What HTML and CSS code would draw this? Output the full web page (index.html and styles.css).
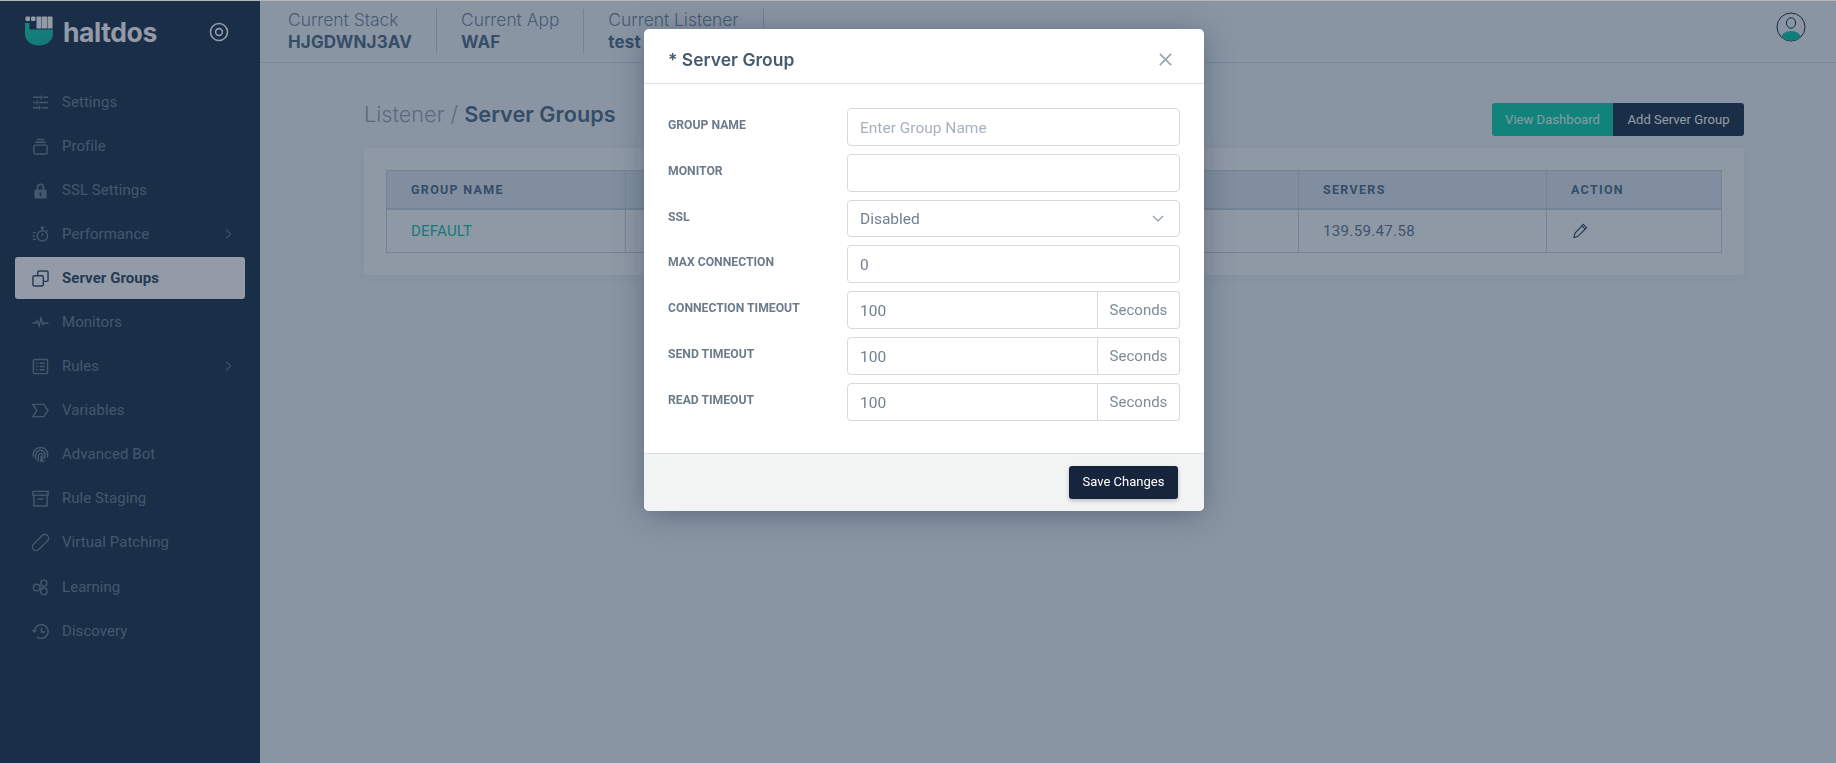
FILE: index.html
```html
<!DOCTYPE html>
<html lang="en">
<head>
<meta charset="utf-8">
<title>Server Groups</title>
<link rel="stylesheet" href="styles.css">
</head>
<body>
<div class="app">
  <aside class="sidebar">
    <div class="brand">
      <svg class="brand-mark" viewBox="0 0 28 30" aria-hidden="true">
        <defs><linearGradient id="lg" x1="0" y1="0" x2="1" y2="1"><stop offset="0" stop-color="#12d8b0"/><stop offset="1" stop-color="#08b8a0"/></linearGradient></defs>
        <path fill="url(#lg)" d="M0 7h4.500v6.500H28V18c0 7-7 11.500-14 11.500S0 25 0 18z"/>
        <rect x=".5" y=".5" width="4.500" height="4.500" rx="1" fill="#fff"/><rect x="6" y=".5" width="4.500" height="4.500" rx="1" fill="#fff"/><rect x="11.500" y=".5" width="5" height="12" rx=".6" fill="#fff"/><rect x="17" y=".5" width="5" height="12" rx=".6" fill="#fff"/><rect x="22.500" y=".5" width="5" height="12" rx=".6" fill="#fff"/>
      </svg>
      <span class="brand-name">haltdos</span>
      <svg class="brand-target" viewBox="0 0 20 20" aria-hidden="true"><circle cx="10" cy="10" r="8.500" fill="none" stroke="#fff" stroke-width="1.600"/><circle cx="10" cy="10" r="3.400" fill="none" stroke="#fff" stroke-width="1.600"/></svg>
    </div>
    <nav class="menu">
      <a class="item"><svg class="ic" viewBox="0 0 18 18"><path d="M1 3.500h8M12 3.500h5M1 9h3M7 9h10M1 14.500h6M10 14.500h7M10 1.500v4M5.500 7v4M8 12.500v4"/></svg><span>Settings</span></a>
      <a class="item"><svg class="ic" viewBox="0 0 18 18"><path d="M5 1.500h8M3.500 4.500h11"/><rect x="2" y="7.500" width="14" height="9.500" rx="1.500"/></svg><span>Profile</span></a>
      <a class="item"><svg class="ic" viewBox="0 0 18 18"><path class="solid" d="M5 8V5.500a4 4 0 0 1 8 0V8h1c.8 0 1.500.7 1.500 1.500V16c0 .8-.7 1.500-1.500 1.500H4c-.8 0-1.500-.7-1.500-1.500V9.500C2.500 8.700 3.200 8 4 8zm1.800 0h4.400V5.500a2.200 2.200 0 0 0-4.400 0zM9 11a1.300 1.300 0 0 0-.6 2.400V15h1.200v-1.600A1.300 1.300 0 0 0 9 11z"/></svg><span>SSL Settings</span></a>
      <a class="item"><svg class="ic" viewBox="0 0 18 18"><circle cx="11" cy="10.500" r="5.500"/><path d="M11 2v3M9 1.500h4M11 8v2.500M1 7h3M0.500 10.500h2.500M1 14h3M15.500 4.500l1 1"/></svg><span>Performance</span><svg class="chev" viewBox="0 0 8 12"><path d="M1.500 1l5 5-5 5"/></svg></a>
      <a class="item active"><svg class="ic" viewBox="0 0 18 18"><rect x="1" y="6" width="11" height="11" rx="1.500"/><path d="M6 6V2.500C6 1.700 6.700 1 7.500 1h8c.8 0 1.500.7 1.500 1.500v8c0 .8-.7 1.500-1.500 1.500H12"/></svg><span>Server Groups</span></a>
      <a class="item"><svg class="ic" viewBox="0 0 18 18"><path d="M.5 9.500h3.500l1.500-2.500 2 5.500 2-8 2 6.500 1.200-1.500h4.800"/></svg><span>Monitors</span></a>
      <a class="item"><svg class="ic" viewBox="0 0 18 18"><rect x="1.500" y="1.500" width="15" height="15" rx="1.500"/><path d="M4.500 5.500h1.500M8 5.500h5.500M4.500 9h1.500M8 9h5.500M4.500 12.500h1.500M8 12.500h5.500"/></svg><span>Rules</span><svg class="chev" viewBox="0 0 8 12"><path d="M1.500 1l5 5-5 5"/></svg></a>
      <a class="item"><svg class="ic" viewBox="0 0 18 18"><path d="M1 2.500h11.500L17 9l-4.500 6.500H1L5 9z"/></svg><span>Variables</span></a>
      <a class="item"><svg class="ic" viewBox="0 0 18 18"><path d="M1.500 11.500C.5 5.500 4 1.500 9 1.500s8.500 4 7.500 10.500M4 14.500C3 8.500 5 4.500 9 4.500s5.500 3.500 4.500 9M6.800 16.500C5.800 11 7 7.500 9.300 7.500s2.300 3.500 1.500 9M9.500 10.500c.2 2 .1 4-.2 6.500M13 15.500l-.3 1.500"/></svg><span>Advanced Bot</span></a>
      <a class="item"><svg class="ic" viewBox="0 0 18 18"><rect x="1" y="1.500" width="16" height="4"/><path d="M2 5.500V17h14V5.500M6 9.500h6"/></svg><span>Rule Staging</span></a>
      <a class="item"><svg class="ic" viewBox="0 0 18 18"><rect x="-1.500" y="5" width="21" height="8" rx="4" transform="rotate(-45 9 9)"/><path d="M8 8l.1.1M10 8l.1.1M8 10l.1.100M10 10l.1.100"/></svg><span>Virtual Patching</span></a>
      <a class="item item-low"><svg class="ic" viewBox="0 0 18 18"><circle cx="5" cy="9" r="3.500"/><circle cx="12.500" cy="4.500" r="3.300"/><circle cx="12.500" cy="13" r="3.500"/></svg><span>Learning</span></a>
      <a class="item item-low"><svg class="ic" viewBox="0 0 18 18"><path d="M2.500 9A7.300 7.300 0 1 1 5 14.500M.5 7.500l2 2 2-2M10 5v4.500h4"/></svg><span>Discovery</span></a>
    </nav>
  </aside>
  <div class="main">
    <header class="topbar">
      <div class="crumb"><span class="crumb-label">Current Stack</span><strong class="crumb-value">HJGDWNJ3AV</strong></div>
      <div class="crumb"><span class="crumb-label">Current App</span><strong class="crumb-value">WAF</strong></div>
      <div class="crumb"><span class="crumb-label">Current Listener</span><strong class="crumb-value">test</strong></div>
      <svg class="avatar" viewBox="0 0 30 30" aria-hidden="true"><defs><clipPath id="av"><circle cx="15" cy="15" r="13.800"/></clipPath></defs><circle cx="15" cy="15" r="14" fill="none" stroke="#15263c" stroke-width="1"/><ellipse cx="15" cy="26" rx="10" ry="7" fill="#08c8a8" clip-path="url(#av)"/><ellipse cx="15" cy="11" rx="4.600" ry="5.200" fill="none" stroke="#15263c" stroke-width="1"/></svg>
    </header>
    <main class="content">
      <div class="title-row">
        <h1 class="title"><span class="title-light">Listener / </span>Server Groups</h1>
        <div class="actions"><button class="btn btn-teal">View Dashboard</button><button class="btn btn-navy">Add Server Group</button></div>
      </div>
      <section class="card">
        <table class="table">
          <thead><tr><th class="c1">Group Name</th><th class="c2"></th><th class="c3">Servers</th><th>Action</th></tr></thead>
          <tbody><tr><td class="link">DEFAULT</td><td></td><td>139.59.47.58</td><td><svg class="pencil" viewBox="0 0 16 16" aria-hidden="true"><path d="M11 1.500l3.500 3.500L5 14.500l-4 1 1-4.500zM9.500 3l3.500 3.500"/></svg></td></tr></tbody>
        </table>
      </section>
    </main>
  </div>
</div>
<div class="backdrop"></div>
<div class="modal">
  <div class="modal-head"><h2 class="modal-title">* Server Group</h2><svg class="close" viewBox="0 0 14 14" aria-hidden="true"><path d="M1 1l12 12M13 1L1 13"/></svg></div>
  <form class="modal-body">
    <label class="lbl">Group Name</label><input class="field" placeholder="Enter Group Name">
    <label class="lbl">Monitor</label><input class="field">
    <label class="lbl">SSL</label><div class="field select"><span>Disabled</span><svg class="caret" viewBox="0 0 12 8" aria-hidden="true"><path d="M1 1l5 5 5-5"/></svg></div>
    <label class="lbl">Max Connection</label><input class="field" value="0">
    <label class="lbl">Connection Timeout</label><div class="group"><input class="field" value="100"><span class="addon">Seconds</span></div>
    <label class="lbl">Send Timeout</label><div class="group"><input class="field" value="100"><span class="addon">Seconds</span></div>
    <label class="lbl">Read Timeout</label><div class="group"><input class="field" value="100"><span class="addon">Seconds</span></div>
  </form>
  <div class="modal-foot"><button class="btn-save">Save Changes</button></div>
</div>
</body>
</html>
```
FILE: styles.css
```css
* { box-sizing: border-box; }
html, body { margin: 0; height: 100%; overflow: hidden; }
body { font-family: Roboto, "Liberation Sans", sans-serif; background: #eef4f8; border-top: 1px solid #b6b6b6; }
.app { display: flex; height: 762px; }

.sidebar { width: 260px; flex: none; background: #1b2f47; }
.brand { display: flex; align-items: center; height: 62px; padding: 4px 0 0 25px; }
.brand-mark { width: 28px; height: 30px; flex: none; margin-top: -6px; }
.brand-name { margin-left: 10px; font: 700 26.500px/1 Inter, sans-serif; color: #fff; letter-spacing: -.4px; width: 146px; flex: none; margin-top: -4px; }
.brand-target { width: 20px; height: 20px; flex: none; margin-left: 0; margin-top: -4px; }
.menu { display: flex; flex-direction: column; gap: 2px; padding: 18px 15px 0; }
.item { display: flex; align-items: center; height: 42px; padding: 0 13px 0 17px; border-radius: 3px; color: #6a7e93; font-size: 15px; letter-spacing: .05px; }
.item-low { position: relative; top: 1px; }
.item span { margin-left: 13px; flex: 1; }
.ic { width: 17px; height: 17px; flex: none; fill: none; stroke: currentColor; stroke-width: 1.500; overflow: visible; }
.ic .solid { fill: currentColor; stroke: none; }
.chev { width: 7px; height: 12px; flex: none; fill: none; stroke: currentColor; stroke-width: 1.200; }
.active { background: #fff; color: #2c4563; font-weight: 700; }

.main { flex: 1; min-width: 0; display: flex; flex-direction: column; }
.topbar { display: flex; align-items: center; height: 62px; padding: 8px 0 10px 28px; border-bottom: 1px solid #cfd9e4; flex: none; }
.crumb { display: flex; flex-direction: column; height: 44px; padding-right: 24px; margin-right: 24px; border-right: 1px solid #c4ced9; }
.crumb-label { font: 300 17.400px/22px Inter, sans-serif; color: #6f859b; white-space: nowrap; }
.crumb-value { font: 700 17px/22px Inter, sans-serif; color: #4f6a86; letter-spacing: .12px; }
.avatar { width: 30px; height: 30px; margin-left: auto; margin-right: 30px; margin-top: -8px; }

.content { padding: 40px 92px 0 104px; }
.title-row { display: flex; justify-content: space-between; align-items: flex-start; height: 45px; }
.title { margin: -4px 0 0; font: 600 21.700px/30px Inter, sans-serif; color: #4f6a86; }
.title-light { font-weight: 300; color: #93a3b3; }
.actions { display: flex; }
.btn { height: 33px; border: 0; font: 400 13.100px/33px Roboto, sans-serif; color: #fff; padding: 0; }
.btn-teal { width: 121px; background: #09d1a9; border-radius: 3px 0 0 3px; color: #e8fffa; }
.btn-navy { width: 131px; background: #1b2f47; border-radius: 0 3px 3px 0; }
.card { background: #fafbfd; border-radius: 4px; padding: 22px; height: 127px; box-shadow: 0 2px 14px rgba(30,50,80,.06); }
.table { width: 1336px; border-collapse: collapse; table-layout: fixed; }
.table th, .table td { border: 1px solid #c5d1dd; padding: 0 0 0 24px; text-align: left; }
.table th { height: 38px; background: #dce6ef; border-bottom-width: 2px; font-size: 12.500px; letter-spacing: 1.300px; text-transform: uppercase; color: #4d6a88; font-weight: 700; }
.table td { height: 44px; font-size: 15px; color: #5d758c; letter-spacing: .35px; }
.c1 { width: 239px; }
.c2 { width: 673px; }
.c3 { width: 248px; }
.table td.link { color: #10bfa8; letter-spacing: .2px; }
.pencil { width: 15px; height: 15px; margin-left: 2px; fill: none; stroke: #28415e; stroke-width: 1.200; display: block; }

.backdrop { position: fixed; inset: 1px 0 0; background: rgba(27,47,71,.48); }
.modal { position: fixed; left: 644px; top: 29px; width: 560px; background: #fff; border-radius: 5px; overflow: hidden; box-shadow: 0 4px 30px rgba(15,30,50,.35); }
.modal-head { display: flex; align-items: center; justify-content: space-between; height: 55px; padding: 7px 32px 0 24px; border-bottom: 1px solid #dde1e4; }
.modal-title { margin: 0; font: 600 17.500px/1 Inter, sans-serif; color: #465a6f; }
.close { width: 13px; height: 13px; fill: none; stroke: #9aa9b6; stroke-width: 2; }
.modal-body { display: grid; grid-template-columns: 179px 333px; grid-auto-rows: 37.830px; row-gap: 8px; padding: 24px 24px 32px; }
.lbl { font-size: 12.200px; font-weight: 700; color: #6c7b8b; text-transform: uppercase; line-height: 35px; white-space: nowrap; }
.field { width: 100%; height: 100%; border: 1px solid #d6dade; border-radius: 4px; padding: 2px 12px 0; font: 400 15.500px Roboto, sans-serif; color: #718192; background: #fff; outline: 0; }
.field::placeholder { color: #a8b2bc; opacity: 1; }
.select { display: flex; align-items: center; justify-content: space-between; padding-top: 0; }
.caret { width: 12px; height: 8px; fill: none; stroke: #8b98a5; stroke-width: 1.200; margin-right: 3px; }
.group { display: flex; }
.group .field { flex: 1; min-width: 0; border-radius: 4px 0 0 4px; }
.addon { width: 82px; flex: none; border: 1px solid #d6dade; border-left: 0; border-radius: 0 4px 4px 0; font-size: 15px; line-height: 37px; text-align: center; color: #7d8b99; }
.modal-foot { display: flex; justify-content: flex-end; height: 58px; padding: 12px 26px 0 0; background: #f2f4f4; border-top: 1px solid #dbdfe1; }
.btn-save { width: 109px; height: 33px; border: 0; border-radius: 3px; padding: 0 0 2px; background: #17253c; color: #fff; font: 400 13px Roboto, sans-serif; box-shadow: 0 2px 4px rgba(20,30,50,.25); }
```
